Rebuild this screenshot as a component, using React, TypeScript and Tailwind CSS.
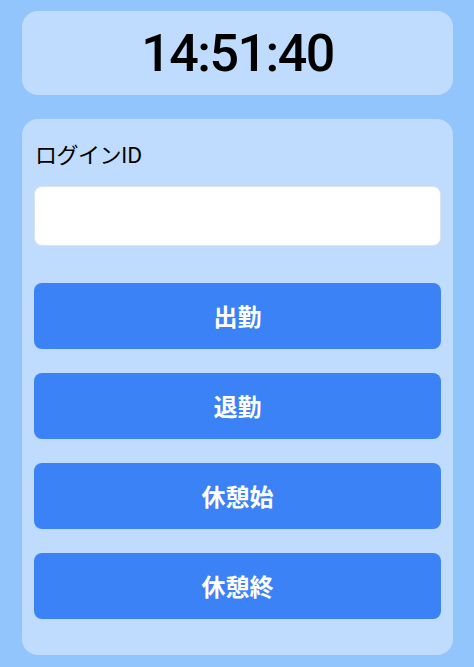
import React from "react";

export default function App() {
  const buttons = ["出勤", "退勤", "休憩始", "休憩終"];
  return (
    <div
      className="min-h-screen bg-[#93c5fd] pl-[22px] pr-[21px] pt-[11px] pb-3 flex flex-col gap-6"
      style={{ fontFamily: '"Noto Sans", "Noto Sans CJK JP", sans-serif' }}
    >
      <div className="h-[84px] rounded-2xl bg-[#bfdbfe] flex items-center justify-center">
        <span
          className="text-[52px] leading-none font-medium tracking-[-1.5px] text-black pt-[2px]"
          style={{ fontFamily: 'Roboto, "Noto Sans", sans-serif' }}
        >
          14:51:40
        </span>
      </div>
      <div className="rounded-2xl bg-[#bfdbfe] px-3 pt-3 pb-9">
        <div
          className="h-[44px] flex items-center text-[22px] font-normal tracking-[-0.5px] text-black pl-[1px]"
          style={{ fontFamily: '"Noto Sans CJK JP", sans-serif' }}
        >
          ログインID
        </div>
        <input
          type="text"
          className="mt-[11px] block w-full h-[60px] rounded-lg bg-white border border-[#dbe4ee] outline-none px-3 text-lg"
        />
        <div className="mt-[37px] flex flex-col gap-6">
          {buttons.map((b) => (
            <button
              key={b}
              className="h-[66px] w-full rounded-lg bg-[#3b82f6] text-white text-2xl font-bold flex items-center justify-center"
              style={{ fontFamily: '"Noto Sans CJK JP", sans-serif' }}
            >
              {b}
            </button>
          ))}
        </div>
      </div>
    </div>
  );
}
